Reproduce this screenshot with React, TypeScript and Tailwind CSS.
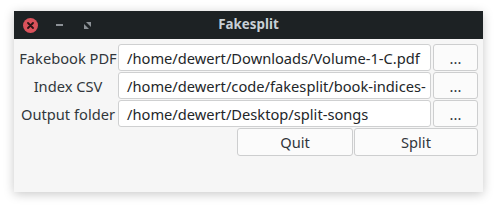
import { useState } from 'react'

const font = { fontFamily: '"Noto Sans", "Open Sans", sans-serif' }

function PathRow({ label, value }: { label: string; value: string }) {
  return (
    <div className="flex h-[27px] items-stretch">
      <div className="flex w-[100px] items-center justify-center text-[14.67px] text-[#31363b]">{label}</div>
      <div className="flex flex-1 items-center overflow-hidden whitespace-nowrap rounded-[3px] border border-[#cfd0d1] bg-white pl-[8px] text-[14.67px] text-[#232629]">
        {value}
      </div>
      <button className="ml-[2px] flex w-[45px] items-center justify-center rounded-[3px] border border-[#cdcecf] bg-[#fbfbfb] text-[14.67px] text-[#31363b]">
        ...
      </button>
    </div>
  )
}

export default function App() {
  const [paths] = useState({
    pdf: '/home/dewert/Downloads/Volume-1-C.pdf',
    csv: '/home/dewert/code/fakesplit/book-indices-',
    out: '/home/dewert/Desktop/split-songs',
  })

  return (
    <div className="h-[210px] w-[497px] bg-white pl-[14px] pt-[11px]" style={font}>
      <div className="flex h-[181px] w-[469px] flex-col bg-[#f6f6f6] shadow-[0_2px_10px_rgba(0,0,0,0.22)]">
        {/* Title bar */}
        <div className="relative flex h-[28px] items-center bg-[#1d2224]">
          <div className="ml-[9px] flex h-[15px] w-[15px] items-center justify-center rounded-full bg-[#da525b]">
            <svg width="7" height="7" viewBox="0 0 7 7">
              <path d="M1 1L6 6M6 1L1 6" stroke="#2a1416" strokeWidth="1.8" strokeLinecap="round" />
            </svg>
          </div>
          <div className="ml-[18px] h-[2px] w-[7px] bg-[#8c9196]" />
          <svg className="ml-[21px]" width="7" height="7" viewBox="0 0 7 7">
            <path d="M2 0H7V5Z" fill="#8c9196" />
            <path d="M0 2V7H5Z" fill="#8c9196" />
          </svg>
          <div className="absolute inset-0 flex items-center justify-center text-[13.33px] font-bold text-[#c8d0d6]">
            Fakesplit
          </div>
        </div>

        {/* Body */}
        <div className="flex flex-col gap-[1px] pl-[4px] pr-[5px] pt-[5px]">
          <PathRow label="Fakebook PDF" value={paths.pdf} />
          <PathRow label="Index CSV" value={paths.csv} />
          <PathRow label="Output folder" value={paths.out} />
          <div className="flex h-[28px] justify-end gap-[1px]">
            <button className="w-[116px] rounded-[3px] border border-[#cdcecf] bg-[#fbfbfb] text-[14.67px] text-[#31363b]">Quit</button>
            <button className="w-[124px] rounded-[3px] border border-[#cdcecf] bg-[#fbfbfb] text-[14.67px] text-[#31363b]">Split</button>
          </div>
        </div>
      </div>
    </div>
  )
}
